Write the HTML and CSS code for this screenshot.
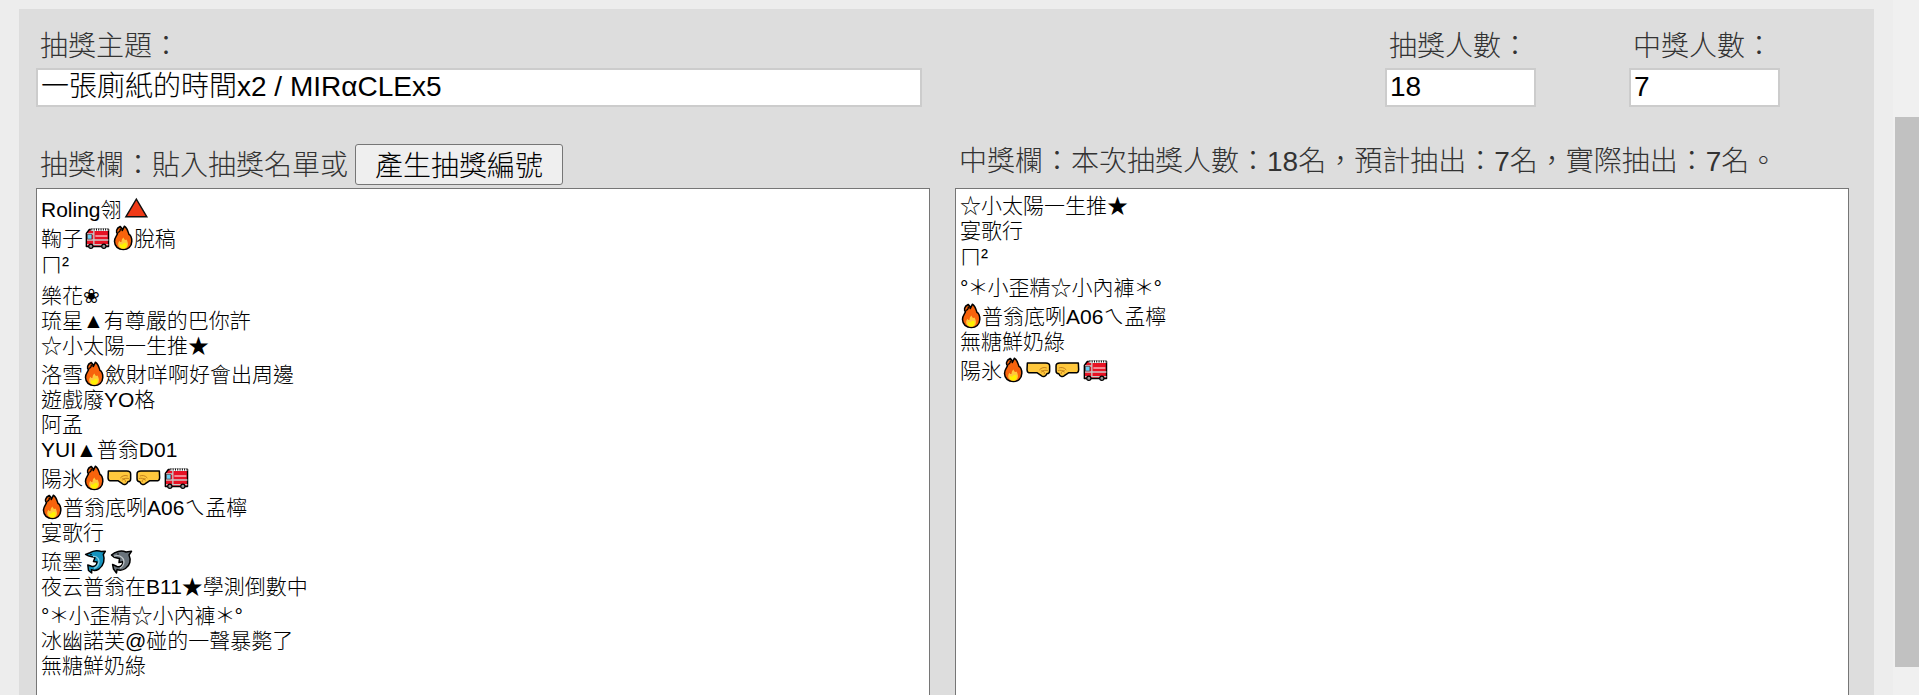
FILE: index.html
```html
<!DOCTYPE html>
<html lang="zh-Hant">
<head>
    <meta charset="UTF-8">
    <meta name="viewport" content="width=device-width, initial-scale=1.0">
    <title>抽獎</title>
    <link rel="stylesheet" href="styles.css">
</head>
<body>

    <!-- Emoji shapes used in the name lists -->
    <svg class="defs" width="0" height="0">
        <symbol id="fire" viewBox="0 0 22 26">
            <path d="M8.2 1.5C10 2.600 10.300 4 10.200 5.500 11.300 3.600 12 2 12.300 1.200 15.600 3.200 16 7 17 9.500 18.500 9.800 20 13 19.800 16.500 19.600 21.500 16 24.600 11.400 24.600 6.200 24.600 2.600 21.400 2.500 16.600 2.400 12.500 4.800 10.700 5.600 8.600 4 7.500 3.700 3.500 8.200 1.500Z" fill="#f7630c" stroke="#000" stroke-width="1.500" stroke-linejoin="round"/>
            <path d="M5.800 7.500C7.500 7 8.500 5.500 8.400 3.500" fill="none" stroke="#000" stroke-width="1.200"/>
            <path d="M11.500 12.500C12 15 14 15.500 14.500 14.500 16.800 18 16.800 23.600 11.300 23.700 6 23.600 5 19 7.400 15.700 8 17 9 17.200 9.500 16.700 9.500 15 10.400 13.500 11.500 12.500Z" fill="#ffc83d"/>
            <path d="M11.500 18.200 14 17.700C15.500 21 14.200 23.500 11.300 23.600 8 23.500 7.500 21 8.200 18.700L9.600 20Z" fill="#fff100"/>
        </symbol>
        <symbol id="truck" viewBox="0 0 28 24">
            <path d="M6 3.500H25.200V20.500H3V7.500Z" fill="#e81224" stroke="#000" stroke-width="1.400" stroke-linejoin="round"/>
            <path d="M7.500 4H25" stroke="#fff" stroke-width="2"/>
            <path d="M8 3.500H25" stroke="#000" stroke-width="2.200" stroke-dasharray="1 1.300"/>
            <path d="M3.700 8H10M10.500 5V19M3.700 14H25M3.700 18.600H25" stroke="#c9c9c9" stroke-width="1.300"/>
            <path d="M12 10H24" stroke="#fff" stroke-width="1"/>
            <rect x="4" y="8.500" width="4.500" height="4.500" fill="#6bd0f5" stroke="#444" stroke-width=".6"/>
            <circle cx="7.500" cy="20.300" r="2.100" fill="#999" stroke="#000" stroke-width="1.200"/>
            <circle cx="20.500" cy="20.300" r="2.100" fill="#999" stroke="#000" stroke-width="1.200"/>
        </symbol>
        <symbol id="fist" viewBox="0 0 28 24">
            <path d="M3 5H21.500C24 5 25.300 6.200 25.300 8V13C25.300 15 23.800 15.600 22.500 15.700 21.500 18.300 19 19.500 17 17.700L12.500 14.700H4.500C3 14.500 2.700 13 2.700 11.500Z" fill="#ffc83d" stroke="#000" stroke-width="1.500" stroke-linejoin="round"/>
            <path d="M15 12C17 9.500 20 9 22.500 10M17 14.500C18.500 12 21 12 23.500 12.500M20 16C20.500 14 18.500 12 16.500 13" fill="none" stroke="#c4811c" stroke-width="1"/>
        </symbol>
        <symbol id="dolphin" viewBox="0 0 26 26">
            <path d="M2.600 5.500 7 3.700C11 1 16 1.300 18.500 2.600L22.300 2.300 20.300 5.500C22 10 21 16.500 16 20 13 21.700 10 21.500 8.500 20.700L8.700 24 5.500 21.500 4.800 16 8.500 17.300C12 18 14 15.800 14 13L10.500 12.500 12 8.500C9 7.500 6 7.800 2.600 5.500Z" fill="#1492bd" stroke="#000" stroke-width="1.500" stroke-linejoin="round"/>
            <path d="M10 7.500C14 7 17 10 15.500 14.500 14.700 17 13 18.700 11 19.300" fill="none" stroke="#83cbe2" stroke-width="1.300"/>
            <circle cx="8" cy="5.500" r=".8"/>
        </symbol>
        <symbol id="shark" viewBox="0 0 26 26">
            <path d="M2.500 6C6 2.500 12 1 17 3L22.500 2.300 20 6C22.300 11 21 16.500 16.500 19.500 13.500 21.500 10 21.300 8 20.500L7.500 24 4.500 20 3.600 15.500 8 17.500C12 18.300 14 15.800 13.800 12.800L10 13.500 10.500 9.500C7.500 9 5 9.300 2.500 6Z" fill="#69737b" stroke="#000" stroke-width="1.500" stroke-linejoin="round"/>
            <path d="M5 7.300C9 5.500 11 6.500 13 8.500 16.500 11.500 15 17 11 19.300" fill="none" stroke="#c3c8cb" stroke-width="1.100"/>
            <circle cx="9" cy="5" r=".8"/>
        </symbol>
        <symbol id="triangle" viewBox="0 0 28 24">
            <path d="M14 2.200 24.500 19.800H3.500Z" fill="#f03a17" stroke="#111" stroke-width="1.400"/>
        </symbol>
    </svg>

    <div class="page">
        <div class="panel">

            <div class="settings">
                <div class="field topic">
                    <label for="topic">抽獎主題：</label>
                    <input id="topic" type="text" value="一張廁紙的時間x2 / MIRαCLEx5">
                </div>
                <div class="field">
                    <label for="total">抽獎人數：</label>
                    <input id="total" type="text" value="18">
                </div>
                <div class="field">
                    <label for="winners">中獎人數：</label>
                    <input id="winners" type="text" value="7">
                </div>
            </div>

            <div class="lists">
                <div class="column">
                    <div class="title">抽獎欄：貼入抽獎名單或<button type="button">產生抽獎編號</button></div>
                    <div class="names">
                        <p class="first">Roling翎<svg class="wide"><use href="#triangle"/></svg></p>
                        <p class="tall">鞠子<svg class="wide"><use href="#truck"/></svg><svg class="fire"><use href="#fire"/></svg>脫稿</p>
                        <p class="mid">ㄇ²</p>
                        <p class="high">樂花<span class="flower">❀</span></p>
                        <p>琉星▲有尊嚴的巴你許</p>
                        <p>☆小太陽一生推★</p>
                        <p class="tall">洛雪<svg class="fire"><use href="#fire"/></svg>斂財咩啊好會出周邊</p>
                        <p>遊戲廢YO格</p>
                        <p>阿孟</p>
                        <p>YUI▲普翁D01</p>
                        <p class="tall">陽氷<svg class="fire"><use href="#fire"/></svg><svg class="wide"><use href="#fist"/></svg><svg class="wide flip"><use href="#fist"/></svg><svg class="wide"><use href="#truck"/></svg></p>
                        <p class="tall"><svg class="fire"><use href="#fire"/></svg>普翁底咧A06ㄟ孟檸</p>
                        <p>宴歌行</p>
                        <p class="tall">琉墨<svg class="fish"><use href="#dolphin"/></svg><svg class="fish"><use href="#shark"/></svg></p>
                        <p>夜云普翁在B11★學測倒數中</p>
                        <p class="tall">°<span class="star">＊</span>小歪精☆小內褲<span class="star">＊</span>°</p>
                        <p>冰幽諾芙@碰的一聲暴斃了</p>
                        <p>無糖鮮奶綠</p>
                    </div>
                </div>

                <div class="column">
                    <div class="title result">中獎欄：本次抽獎人數：18名，預計抽出：7名，實際抽出：7名。</div>
                    <div class="names">
                        <p>☆小太陽一生推★</p>
                        <p>宴歌行</p>
                        <p class="mid">ㄇ²</p>
                        <p class="high">°<span class="star">＊</span>小歪精☆小內褲<span class="star">＊</span>°</p>
                        <p class="tall"><svg class="fire"><use href="#fire"/></svg>普翁底咧A06ㄟ孟檸</p>
                        <p>無糖鮮奶綠</p>
                        <p class="tall">陽氷<svg class="fire"><use href="#fire"/></svg><svg class="wide"><use href="#fist"/></svg><svg class="wide flip"><use href="#fist"/></svg><svg class="wide"><use href="#truck"/></svg></p>
                    </div>
                </div>
            </div>

        </div>
        <div class="scrollbar"><div class="thumb"></div></div>
    </div>

</body>
</html>
```

FILE: styles.css
```css
* {
    box-sizing: border-box;
}

body {
    margin: 0;
    height: 100vh;
    overflow: hidden;
    background-color: #ededed;
    color: #333;
    font-family: "Liberation Sans", "Noto Sans CJK TC", sans-serif;
    font-size: 28px;
    font-weight: 300;
}

.defs {
    display: none;
}

.page {
    display: flex;
    height: 100vh;
}

.panel {
    width: 1855px;
    margin: 9px 19px 0 19px;
    padding: 16px 0 0 17px;
    background-color: #ddd;
    flex-shrink: 0;
    overflow: hidden;
}

.settings {
    display: flex;
    gap: 93px;
}

.field {
    width: 151px;
}

.field.topic {
    width: 886px;
    margin-right: 370px;
}

label {
    display: block;
    height: 43px;
    padding-left: 4px;
    line-height: 43px;
    white-space: nowrap;
}

input {
    display: block;
    width: 100%;
    height: 39px;
    padding: 0 3px 2px;
    border: 2px solid #ccc;
    background-color: #fff;
    color: #000;
    font: inherit;
}

.topic input {
    padding-bottom: 7px;
}

.lists {
    display: flex;
    gap: 25px;
    margin-top: 37px;
}

.column {
    width: 894px;
}

.title {
    display: flex;
    height: 44px;
    padding-left: 4px;
    line-height: 43px;
    white-space: nowrap;
}

.title.result {
    padding-left: 4px;
    line-height: 36px;
}

button {
    width: 208px;
    height: 41px;
    margin-left: 7px;
    padding: 0 0 2px;
    border: 1px solid #767676;
    border-radius: 3px;
    background-color: #efefef;
    color: #000;
    font: inherit;
}

.names {
    height: 700px;
    padding: 4px;
    border: 1px solid #767676;
    background-color: #fff;
    color: #000;
    font-size: 21px;
}

.names p {
    display: flex;
    height: 25px;
    margin: 0;
    line-height: 26px;
    white-space: pre;
}

.names .first {
    height: 29px;
    padding-top: 4px;
}

.names .tall {
    height: 29px;
    padding-top: 4px;
}

.names .mid {
    height: 26px;
    padding-top: 1px;
}

.names .high {
    height: 31px;
    padding-top: 6px;
}

.names svg {
    flex-shrink: 0;
    height: 24px;
}

.names .wide {
    width: 28.7px;
}

.names .fire {
    width: 22px;
    height: 26px;
    margin-top: -1px;
}

.names .fish {
    width: 26px;
    height: 26px;
}

.flip {
    transform: scaleX(-1);
}

.flower {
    font-family: "DejaVu Sans", sans-serif;
    font-size: 20px;
}

.star {
    width: 19px;
    margin: 0 1px 0 -1px;
}

/* page scrollbar */
.scrollbar {
    width: 26px;
    padding: 117px 0 0 2px;
    background-color: #f0f0f0;
    flex-shrink: 0;
}

.thumb {
    height: 550px;
    background-color: #c1c1c1;
}
```
